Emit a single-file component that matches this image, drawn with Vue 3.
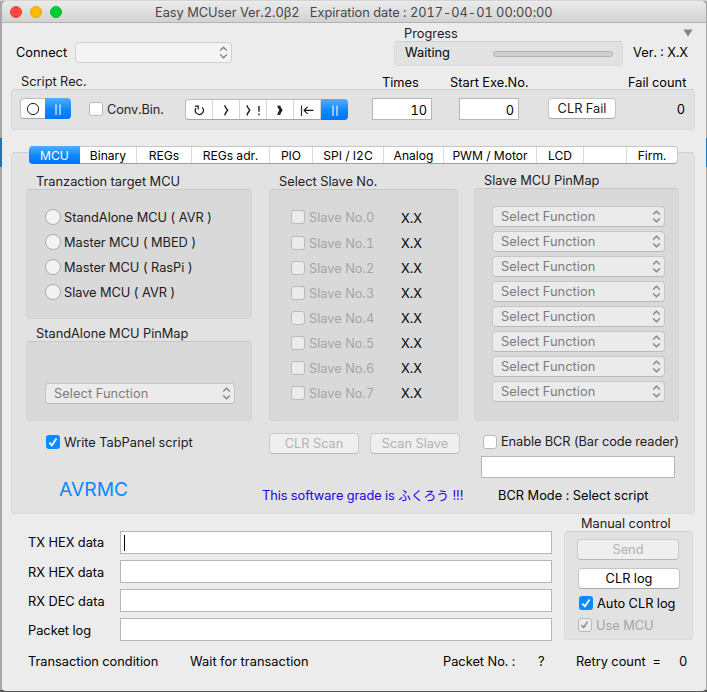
<script setup>
const slots = [0, 1, 2, 3, 4, 5, 6, 7]
const targets = ['StandAlone MCU ( AVR )', 'Master MCU ( MBED )', 'Master MCU ( RasPi )', 'Slave MCU ( AVR )']
const tabs = [
  { label: 'MCU', w: 51 },
  { label: 'Binary', w: 57 },
  { label: 'REGs', w: 55 },
  { label: 'REGs adr.', w: 78 },
  { label: 'PIO', w: 43 },
  { label: 'SPI / I2C', w: 71 },
  { label: 'Analog', w: 60 },
  { label: 'PWM / Motor', w: 93 },
  { label: 'LCD', w: 47 },
  { label: '', w: 43 },
  { label: 'Firm.', w: 50 },
]
const logs = ['TX HEX data', 'RX HEX data', 'RX DEC data', 'Packet log']
</script>

<template>
  <div class="desk">
    <div class="window">
      <header class="titlebar">
        <i class="light red"></i><i class="light amber"></i><i class="light green"></i>
        <span class="title">Easy MCUser Ver.2.0β2&nbsp;&nbsp; Expiration date : 2017-04-01 00:00:00</span>
      </header>

      <section class="connect">
        <span class="connect-label">Connect</span>
        <div class="select connect-select">
          <span></span>
          <svg class="chev" viewBox="0 0 9 13"><path d="M1.2 4.4 4.5 1.3 7.8 4.4M1.2 8.6 4.5 11.7 7.8 8.6" /></svg>
        </div>
        <div class="progress">
          <span class="progress-label">Progress</span>
          <div class="box progress-box"><span>Waiting</span><i class="bar"></i></div>
        </div>
        <div class="version">
          <svg class="tri" viewBox="0 0 10 8"><path d="M0.5 0.5H9.5L5 7.8Z" /></svg>
          <span class="ver">Ver. : X.X</span>
        </div>
      </section>

      <section class="heads">
        <span class="h-script">Script Rec.</span>
        <span class="h-times">Times</span>
        <span class="h-start">Start Exe.No.</span>
        <span class="h-fail">Fail count</span>
      </section>

      <section class="box script">
        <div class="seg rec">
          <span><svg viewBox="0 0 16 16" class="g16 thin"><circle cx="8" cy="8" r="5.6" /></svg></span>
          <span class="on"><svg viewBox="0 0 16 16" class="g16"><path d="M6 3.5V14M10 3.5V14" /></svg></span>
        </div>
        <i class="check"></i><span class="conv">Conv.Bin.</span>
        <div class="seg play">
          <span><svg viewBox="0 0 16 16" class="g16"><path d="M11 5.4A4 4 0 1 1 5 6.2" /><path d="M4 4.2H7.2V7.6" /></svg></span>
          <span><svg viewBox="0 0 16 16" class="g16 bold"><path d="M6.8 3.2C7 5.4 8.6 6.6 9.6 8.2 8.6 9.8 7 11 6.8 13.4" /></svg></span>
          <span><svg viewBox="0 0 20 16" class="g20 bold"><path d="M4 3.2C4.2 5.4 5.8 6.6 6.8 8.2 5.8 9.8 4.2 11 4 13.4M16 4V9.8M16 11.6V13.2" /></svg></span>
          <span><svg viewBox="0 0 16 16" class="g16 bold"><path d="M6 3.6C6.2 5.6 7.4 6.8 8.2 8.2 7.4 9.6 6.2 10.8 6 13M7.6 3.6C7.8 5.6 9 6.8 9.8 8.2 9 9.6 7.8 10.8 7.6 13" /></svg></span>
          <span><svg viewBox="0 0 16 16" class="g16"><path class="navy" d="M2.5 3.5V14" /><path d="M14.5 8.3H5.2M8.6 4.8 5.1 8.3 8.6 11.8" /></svg></span>
          <span class="on"><svg viewBox="0 0 16 16" class="g16"><path d="M6 3.5V14M10 3.5V14" /></svg></span>
        </div>
        <div class="field num times">10</div>
        <div class="field num start">0</div>
        <div class="btn clr-fail">CLR Fail</div>
        <span class="fails">0</span>
      </section>

      <section class="tabs-area">
        <nav class="tabs">
          <span v-for="(t, i) in tabs" :key="i" :class="{ on: i === 0 }" :style="{ width: t.w + 'px' }">{{ t.label }}</span>
        </nav>
        <div class="box panel">
          <div class="col left">
            <h3 class="t-target">Tranzaction target MCU</h3>
            <div class="inner radios">
              <label v-for="t in targets" :key="t"><i class="radio"></i><span>{{ t }}</span></label>
            </div>
            <h3 class="t-stand">StandAlone MCU PinMap</h3>
            <div class="inner pin">
              <div class="select">
                <span>Select Function</span>
                <svg class="chev" viewBox="0 0 9 13"><path d="M1.2 4.4 4.5 1.3 7.8 4.4M1.2 8.6 4.5 11.7 7.8 8.6" /></svg>
              </div>
            </div>
            <label class="write"><i class="check checked"><svg viewBox="0 0 14 14"><path d="M3.4 7.6 5.9 10.4 10.5 3.6" /></svg></i><span>Write TabPanel script</span></label>
            <div class="brand">AVRMC</div>
          </div>

          <div class="col mid">
            <h3 class="t-slave">Select Slave No.</h3>
            <div class="inner slaves">
              <div v-for="n in slots" :key="n" class="slave">
                <i class="check off"></i><span class="slave-name">Slave No.{{ n }}</span><span class="xx">X.X</span>
              </div>
            </div>
            <div class="scan">
              <div class="btn off">CLR Scan</div>
              <div class="btn off">Scan Slave</div>
            </div>
            <div class="grade">This software grade is ふくろう !!!</div>
          </div>

          <div class="col right">
            <h3 class="t-map">Slave MCU PinMap</h3>
            <div class="inner map">
              <div v-for="n in slots" :key="n" class="select">
                <span>Select Function</span>
                <svg class="chev" viewBox="0 0 9 13"><path d="M1.2 4.4 4.5 1.3 7.8 4.4M1.2 8.6 4.5 11.7 7.8 8.6" /></svg>
              </div>
            </div>
            <label class="bcr"><i class="check"></i><span>Enable BCR (Bar code reader)</span></label>
            <div class="field bcr-field"></div>
            <div class="bcr-mode">BCR Mode : Select script</div>
          </div>
        </div>
      </section>

      <section class="bottom">
        <div class="logs">
          <div v-for="(l, i) in logs" :key="l" class="log">
            <span>{{ l }}</span>
            <div class="field"><i v-if="i === 0" class="caret"></i></div>
          </div>
        </div>
        <div class="manual">
          <span class="manual-title">Manual control</span>
          <div class="box manual-box">
            <div class="btn off">Send</div>
            <div class="btn clr-log">CLR log</div>
            <label class="auto"><i class="check checked"><svg viewBox="0 0 14 14"><path d="M3.4 7.6 5.9 10.4 10.5 3.6" /></svg></i><span>Auto CLR log</span></label>
            <label class="use"><i class="check off"><svg viewBox="0 0 14 14"><path d="M3 7 5.5 9.9 10 3" /></svg></i><span>Use MCU</span></label>
          </div>
        </div>
      </section>

      <footer class="status">
        <span class="s1">Transaction condition</span>
        <span class="s2">Wait for transaction</span>
        <span class="s3">Packet No. :</span>
        <span class="s4">?</span>
        <span class="s5">Retry count&nbsp; =</span>
        <span class="s6">0</span>
      </footer>
    </div>
  </div>
</template>

<style>
body {
  background: #a9a9a9;
}
</style>

<style scoped>
* {
  box-sizing: border-box;
}
.desk {
  width: 707px;
  height: 692px;
  padding: 1px 1px 1px 2px;
  overflow: hidden;
  background: linear-gradient(#d4d4d4 0 1px, transparent 1px), linear-gradient(#a8a8a8 0 138px, #1c74ba 138px 167px, #a8a8a8 167px 690px, #555 690px);
  font: 12.8px/16px Inter, 'Noto Sans CJK JP', sans-serif;
  font-feature-settings: 'tnum';
  color: #000;
  white-space: nowrap;
}
.window {
  height: 690px;
  background: #ececec;
  border-radius: 5px 5px 4px 4px;
  overflow: hidden;
  display: flex;
  flex-direction: column;
}
.titlebar {
  height: 22px;
  flex: none;
  display: flex;
  align-items: center;
  padding-left: 8px;
  background: linear-gradient(#ebebeb, #d2d2d2);
  border-bottom: 1px solid #b3b3b3;
  color: #464646;
}
.light {
  width: 12px;
  height: 12px;
  margin-right: 8px;
  border-radius: 50%;
  border: 1px solid;
}
.red { background: #ff4842; border-color: #e8423d; }
.amber { background: #ffb900; border-color: #e6a500; }
.green { background: #00ce2c; border-color: #13b52f; }
.title { margin: 2px 0 0 85px; letter-spacing: -0.02px; }

.connect {
  display: flex;
  height: 44px;
  padding-left: 14px;
}
.connect-label { width: 59px; padding-top: 22px; }
.select {
  display: flex;
  align-items: center;
  justify-content: space-between;
  height: 21px;
  padding: 0 3px 0 8px;
  border: 1px solid #c6c6c6;
  border-bottom-color: #b9b9b9;
  border-radius: 4px;
  background: #ebebeb;
  color: #7c7c7c;
  letter-spacing: 0.08px;
}
.chev { width: 9px; height: 13px; fill: none; stroke: #848484; stroke-width: 1.4; }
.connect-select { width: 157px; margin-top: 19px; background: #f4f4f4; border-color: #cfcfcf; }
.progress { width: 229px; margin-left: 162px; padding-top: 3px; }
.progress-label { display: block; height: 15px; padding-left: 10px; color: #1c1c1c; }
.box {
  background: #e2e2e2;
  border: 1px solid #dadada;
  border-top-color: #d0d0d0;
  border-radius: 4px;
}
.progress-box { display: flex; align-items: center; height: 25px; padding: 0 9px 2px 10px; justify-content: space-between; }
.bar { width: 120px; height: 6px; margin-top: 2px; border: 1px solid #b4b4b4; border-radius: 3px; background: #d0d0d0; }
.version { width: 60px; margin-left: 10px; padding-top: 6px; display: flex; flex-direction: column; }
.tri { width: 10px; height: 8px; align-self: flex-end; fill: #858585; }
.ver { margin-top: 8px; }

.heads { display: flex; height: 22px; padding: 8px 0 0 19px; }
.h-script { width: 361px; margin-top: -1px; color: #1c1c1c; }
.h-times { width: 68px; }
.h-start { width: 178px; }

.script { display: flex; height: 41px; width: 684px; margin-left: 9px; padding: 8px 9px 0 8px; }
.seg { display: flex; height: 21px; border: 1px solid #bdbdbd; border-bottom-color: #a5a5a5; border-radius: 4px; background: #fff; }
.seg span { width: 27px; display: flex; align-items: center; justify-content: center; border-right: 1px solid #d6d6d6; }
.seg .on { width: 28px; margin: -1px -1px -1px 0; border: 0; border-radius: 0 4px 4px 0; background: linear-gradient(#55adfb, #0b87fb 55%, #0074ff); }
.seg svg { fill: none; stroke: #1a1a1a; stroke-width: 1.2; }
.seg .on svg { stroke: #fff; stroke-width: 1.1; }
.seg .thin { stroke-width: 1; }
.seg .bold { stroke-width: 1.4; }
.seg .navy { stroke: #27277a; }
.g16 { width: 16px; height: 16px; }
.g20 { width: 20px; height: 16px; }
.rec { width: 51px; }
.rec span:first-child { width: 24px; flex: none; border: 0; }
.rec .on { flex: 1; }
.check { display: block; flex: none; width: 14px; height: 14px; border: 1px solid #b9b9b9; border-radius: 3px; background: #fff; }
.check.off { background: #ebebeb; border-color: #bababa; }
.check.checked { border: 0; background: #0a8cff; }
.check svg { display: block; width: 14px; height: 14px; fill: none; stroke: #fff; stroke-width: 1.8; }
.check.off svg { width: 12px; height: 12px; stroke: #8b8b8b; }
.script .check { margin: 4px 4px 0 18px; }
.conv { width: 78px; margin-top: 4px; color: #262626; letter-spacing: -0.1px; }
.play { margin-top: 1px; width: 163px; }
.play .on { flex: 1; }
.field { background: #fff; border: 1px solid #b5b5b5; }
.num { width: 60px; height: 22px; padding: 4px 4px 0 0; text-align: right; }
.times { margin-left: 24px; }
.start { margin-left: 27px; }
.btn {
  display: flex;
  align-items: center;
  justify-content: center;
  height: 21px;
  border: 1px solid #c4c4c4;
  border-bottom-color: #a8a8a8;
  border-radius: 4px;
  background: #fff;
  color: #1c1c1c;
}
.btn.off { background: #efefef; border-color: #cbcbcb; border-bottom-color: #b9b9b9; color: #b2b2b2; }
.clr-fail { width: 68px; margin-left: 29px; }
.fails { margin: 4px 0 0 auto; }

.tabs-area { margin-top: 16px; display: flex; flex-direction: column; }
.tabs {
  position: relative;
  z-index: 1;
  display: flex;
  width: 649px;
  height: 18px;
  margin-left: 27px;
  border: 1px solid #c6c6c6;
  border-bottom-color: #a0a0a0;
  border-left: 0;
  border-radius: 4px;
  background: #fff;
  font-size: 12.1px;
}
.tabs span { flex: none; line-height: 17px; text-align: center; border-right: 1px solid #d9d9d9; }
.tabs span:last-child { border: 0; }
.tabs .on { margin: -1px 0; line-height: 19px; color: #fff; border: 0; border-radius: 4px 0 0 4px; background: linear-gradient(#55adfb, #0b87fb 55%, #0074ff); }
.panel { display: flex; width: 684px; height: 362px; margin: -12px 0 0 9px; padding-left: 14px; }
.col { padding-top: 21px; color: #1c1c1c; }
h3 { margin: 0; height: 15px; font-size: inherit; font-weight: inherit; }
.inner { background: #d9d9d9; border: 1px solid #d2d2d2; border-top-color: #c8c8c8; border-radius: 4px; }
.left { width: 226px; }
.left h3 { padding-left: 10px; }
.radios { height: 130px; padding: 14px 0 0 18px; }
.radios label { display: flex; align-items: center; height: 25px; gap: 3px; letter-spacing: -0.04px; }
.radios label span { padding-top: 2px; }
.radio { width: 16px; height: 16px; border: 1px solid #aaa; border-radius: 50%; background: #f3f3f3; }
h3.t-stand { margin-top: 7px; }
.pin { height: 80px; padding: 41px 16px 0 18px; }
.write { display: flex; align-items: center; gap: 4px; height: 16px; margin: 13px 0 0 20px; }
.write span { padding-top: 1px; }
.brand { margin: 27px 0 0 33px; font-size: 19.3px; line-height: 24px; color: #0a8aff; }
.mid { width: 189px; margin-left: 17px; }
.mid h3 { padding-left: 10px; }
.slaves { height: 232px; padding: 15px 0 0 21px; }
.slave { display: flex; align-items: center; height: 25px; }
.slave:first-child { margin-bottom: 1px; }
.slave .check { margin-top: -1px; }
.slave-name { width: 96px; padding-left: 4px; color: #a5a5a5; }
.xx { color: #000; padding-top: 1px; }
.slave:first-child .xx { padding-top: 2px; }
.scan { display: flex; width: 191px; justify-content: space-between; margin-top: 12px; }
.scan .btn { width: 90px; }
.grade { margin: 34px 0 0 -7px; color: #2000f0; letter-spacing: -0.05px; }
.right { width: 205px; margin-left: 16px; padding-top: 20px; }
.right h3 { padding-left: 10px; }
.map { height: 233px; padding: 17px 13px 0 17px; display: flex; flex-direction: column; gap: 4px; }
.bcr { display: flex; align-items: center; gap: 4px; width: 195px; height: 16px; margin: 13px 0 0 9px; overflow: hidden; letter-spacing: -0.09px; }
.bcr-field { width: 194px; height: 22px; margin: 6px 0 0 7px; }
.bcr-mode { margin: 10px 0 0 24px; color: #000; letter-spacing: 0.04px; }

.bottom { display: flex; margin-top: 1px; }
.logs { width: 550px; padding: 16px 0 0 26px; display: flex; flex-direction: column; gap: 6px; }
.log { display: flex; align-items: center; height: 23px; }
.log span { width: 92px; padding-top: 2px; }
.log:first-child span { padding-top: 0; }
.log .field { width: 432px; height: 23px; padding: 3px; }
.caret { display: block; width: 1px; height: 16px; background: #000; }
.manual { width: 129px; margin-left: 12px; }
.manual-title { display: block; height: 15px; margin-top: 1px; padding-left: 17px; color: #1c1c1c; }
.manual-box { height: 109px; padding: 7px 0 0 12px; }
.manual-box .btn { width: 102px; }
.manual-box .clr-log { margin: 8px 0 0 1px; color: #000; }
.manual-box label { display: flex; align-items: center; gap: 4px; height: 16px; }
.manual-box label span { padding-top: 1px; }
.auto { margin: 6px 0 0 2px; }
.use { margin: 6px 0 0 1px; color: #a5a5a5; }

.status { display: flex; margin-top: 13px; padding-left: 26px; }
.s1 { width: 162px; }
.s2 { width: 253px; letter-spacing: 0.05px; }
.s3 { width: 95px; }
.s4 { width: 38px; }
.s5 { width: 103px; }
</style>
